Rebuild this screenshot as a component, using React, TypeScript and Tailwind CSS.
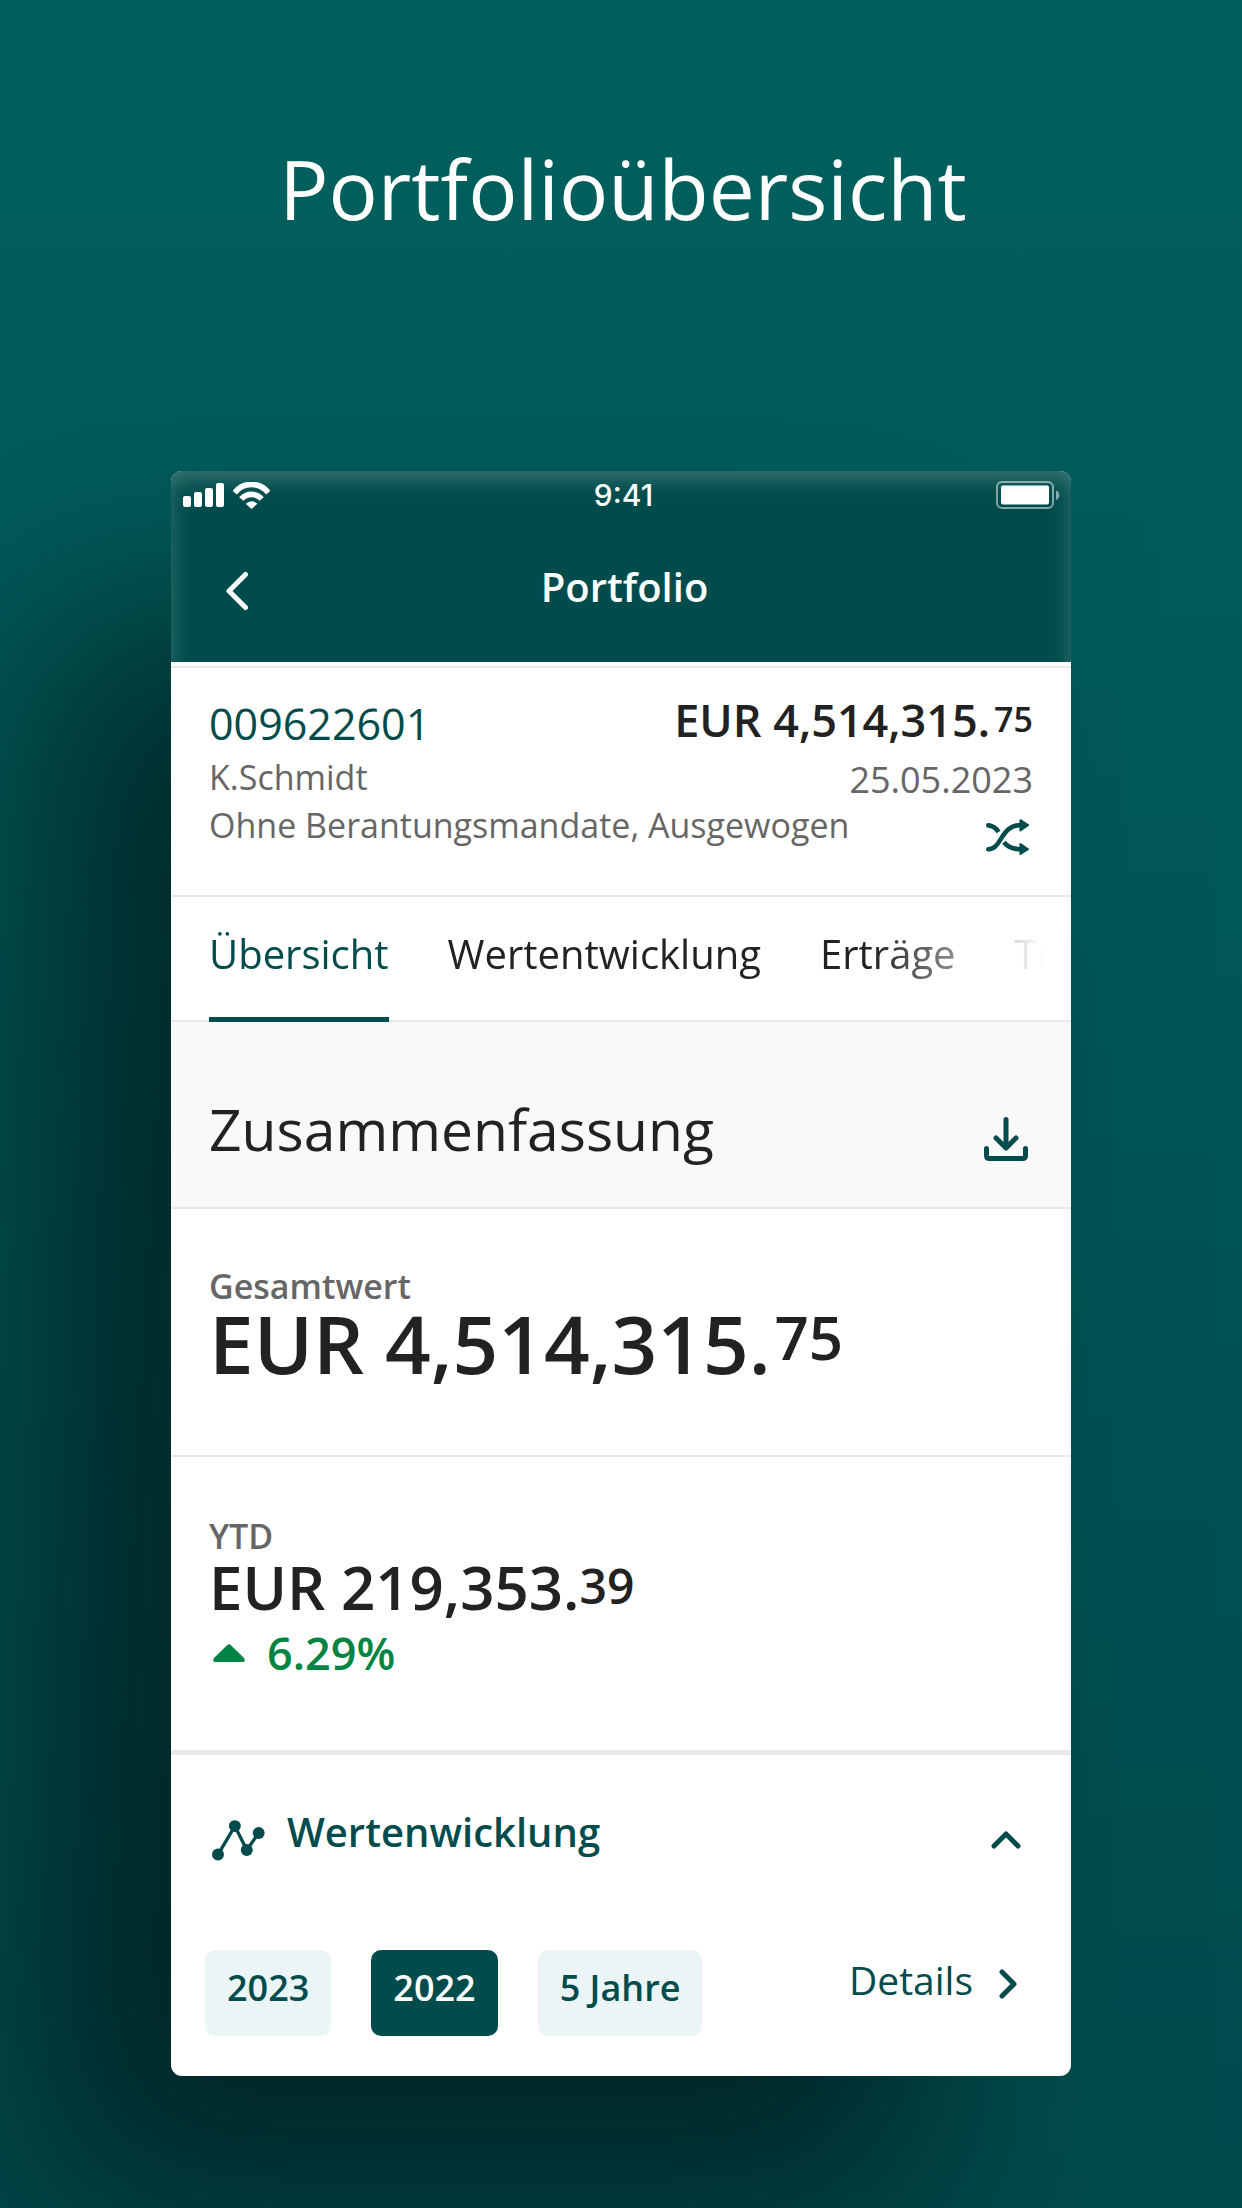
import type { ReactNode } from "react";

function SignalIcon() {
  return (
    <svg viewBox="0 0 41 24" className="h-6 w-[41px]" fill="currentColor" aria-hidden="true">
      <rect x="0" y="13" width="8" height="11" rx="2" />
      <rect x="11" y="9" width="8" height="15" rx="2" />
      <rect x="22" y="5" width="8" height="19" rx="2" />
      <rect x="33" y="0" width="8" height="24" rx="2" />
    </svg>
  );
}

function WifiIcon() {
  return (
    <svg viewBox="0 0 111 81" className="h-[27px] w-[37px]" aria-hidden="true">
      <g fill="none" stroke="currentColor" strokeWidth="17">
        <path d="M5 32A64 64 0 0 1 106 32" />
        <path d="M25 51A40 40 0 0 1 86 51" />
      </g>
      <path d="M38 65Q55.500 50 73 65L55.500 81Z" fill="currentColor" />
    </svg>
  );
}

function BatteryIcon() {
  return (
    <svg viewBox="0 0 68 28" className="h-7 w-[68px]" aria-hidden="true">
      <rect x="1" y="1" width="56" height="26" rx="5" fill="none" stroke="#fff" strokeOpacity=".5" strokeWidth="2" />
      <rect x="5" y="4.500" width="48" height="19" rx="2" fill="#fff" />
      <path d="M60 9.500C64.500 11 64.500 17.500 60 19Z" fill="#fff" fillOpacity=".5" />
    </svg>
  );
}

function BackIcon() {
  return (
    <svg viewBox="0 0 22 40" className="h-10 w-[22px]" fill="none" stroke="currentColor" strokeWidth="5" strokeLinecap="round" strokeLinejoin="round" aria-hidden="true">
      <path d="M19.500 3.500L3 20L19.500 36.500" />
    </svg>
  );
}

function ShuffleIcon() {
  return (
    <svg viewBox="0 0 130 108" className="h-9 w-[43px]" fill="none" stroke="currentColor" strokeWidth="14" aria-hidden="true">
      <path d="M7 91C48 91 44 18 104 18" />
      <path d="M54 70C66 85 80 91 104 91" />
      <path d="M7 19C20 20 30 27 38 39" />
      <g fill="currentColor" stroke="none">
        <circle cx="7" cy="19" r="7" />
        <circle cx="7" cy="91" r="7" />
      </g>
      <g fill="currentColor" strokeWidth="6" strokeLinejoin="round">
        <path d="M104 3L127 18L104 34Z" />
        <path d="M104 75L127 91L104 105Z" />
      </g>
    </svg>
  );
}

function DownloadIcon() {
  return (
    <svg viewBox="0 0 44 44" className="size-11" fill="none" stroke="currentColor" strokeWidth="5" strokeLinecap="round" strokeLinejoin="round" aria-hidden="true">
      <path d="M22 2.500V30" />
      <path d="M12 21L22 31L32 21" />
      <path d="M2.500 31.500V38.500Q2.500 41.500 5.500 41.500H38.500Q41.500 41.500 41.500 38.500V31.500" />
    </svg>
  );
}

function TrendIcon() {
  return (
    <svg viewBox="0 0 160 123" className="h-[41px] w-[53px]" aria-hidden="true">
      <path d="M18 104L69 18L105 90L141 39" fill="none" stroke="currentColor" strokeWidth="10" />
      <g fill="currentColor">
        <circle cx="18" cy="104" r="18" />
        <circle cx="69" cy="18" r="18" />
        <circle cx="105" cy="90" r="18" />
        <circle cx="141" cy="39" r="18" />
      </g>
    </svg>
  );
}

function ChevronUpIcon() {
  return (
    <svg viewBox="0 0 30 42" className="h-[42px] w-[30px]" fill="none" stroke="currentColor" strokeWidth="5" strokeLinecap="round" strokeLinejoin="round" aria-hidden="true">
      <path d="M3 27L15 15L27 27" />
    </svg>
  );
}

function ChevronRightIcon() {
  return (
    <svg viewBox="0 0 18 30" className="h-[30px] w-[18px]" fill="none" stroke="currentColor" strokeWidth="5" strokeLinecap="round" strokeLinejoin="round" aria-hidden="true">
      <path d="M3 3L15 15L3 27" />
    </svg>
  );
}

function GainIcon() {
  return (
    <svg viewBox="0 0 32 18" className="h-[18px] w-8" fill="currentColor" aria-hidden="true">
      <path d="M14.300 0.900Q16 -0.600 17.700 0.900L31 14Q33 18 29.500 18H2.500Q-1 18 1 14Z" />
    </svg>
  );
}

function Tab({ active = false, children }: { active?: boolean; children: ReactNode }) {
  return (
    <button
      type="button"
      role="tab"
      aria-selected={active}
      className={
        active
          ? "h-[125px] shrink-0 border-b-5 border-[#004c4c] pb-1.5 text-[#004c4c]"
          : "h-[125px] shrink-0 border-b-5 border-transparent pb-1.5 text-[#222]"
      }
    >
      {children}
    </button>
  );
}

function Period({ active = false, children }: { active?: boolean; children: ReactNode }) {
  return (
    <button
      type="button"
      aria-pressed={active}
      className={
        active
          ? "h-[86px] rounded-[10px] bg-[#004c4c] px-[22px] pb-2.5 text-white"
          : "h-[86px] rounded-[10px] bg-[#ecf5f6] px-[22px] pb-2.5 text-[#004c4c]"
      }
    >
      {children}
    </button>
  );
}

export default function App() {
  return (
    <main className="flex min-h-screen flex-col items-center overflow-hidden bg-linear-to-b from-[#00605e] to-[#004a4c] font-['Open_Sans',sans-serif]">
      <h1 className="pt-[138px] pl-1 text-[82px] leading-[100px] text-white">Portfolioübersicht</h1>

      <div className="relative mt-[233px] mb-[132px] w-full max-w-[900px] rounded-[11px] bg-white text-[#222] shadow-[-142px_138px_200px_-12px_rgba(0,0,0,0.52)]">
        <header className="rounded-t-[11px] bg-[#004c4c] text-white">
          <div className="grid h-12 grid-cols-[1fr_auto_1fr] items-center pr-[7px] pl-3">
            <div className="flex items-center gap-[9px]">
              <SignalIcon />
              <WifiIcon />
            </div>
            <span className="font-['Inter',sans-serif] text-[30px] leading-8 font-medium">9:41</span>
            <div className="flex justify-end">
              <BatteryIcon />
            </div>
          </div>
          <div className="grid h-[143px] grid-cols-[1fr_auto_1fr] items-center pr-12 pl-[55px]">
            <button type="button" aria-label="Zurück" className="justify-self-start">
              <BackIcon />
            </button>
            <h2 className="pb-2 text-[40px] leading-[48px] font-semibold">Portfolio</h2>
          </div>
        </header>
        <div className="pointer-events-none absolute inset-0 rounded-[11px] shadow-[inset_0_8px_20px_rgba(255,255,255,0.22)]" />

        <section className="mt-1 flex justify-between border-y-2 border-[#e8e8e8] px-[38px] pt-[27px] pb-10">
          <div>
            <p className="text-[43px] leading-[58px] text-[#004c4c]">009622601</p>
            <p className="text-[34px] leading-[48px] text-[#666]">K.Schmidt</p>
            <p className="text-[34px] leading-[48px] whitespace-nowrap text-[#666]">Ohne Berantungsmandate, Ausgewogen</p>
          </div>
          <div className="flex w-0 flex-col items-end whitespace-nowrap">
            <p className="text-[45px] leading-[50px] font-semibold">
              EUR 4,514,315.<span className="ml-1 align-[5px] text-[34px] leading-none">75</span>
            </p>
            <p className="mt-[11px] text-[36px] leading-[48px] text-[#666]">25.05.2023</p>
            <button type="button" aria-label="Portfolio wechseln" className="mt-[15px] mr-1 text-[#004c4c]">
              <ShuffleIcon />
            </button>
          </div>
        </section>

        <nav className="shadow-[inset_0_-2px_0_#e8e8e8]">
          <div
            role="tablist"
            className="flex gap-[59px] overflow-hidden pl-[38px] text-[40px] leading-[56px] [mask-image:linear-gradient(to_right,black_78%,transparent_97%)]"
          >
            <Tab active>Übersicht</Tab>
            <Tab>Wertentwicklung</Tab>
            <Tab>Erträge</Tab>
            <Tab>Tr</Tab>
          </div>
        </nav>

        <div className="flex items-end justify-between border-b-2 border-[#e8e8e8] bg-[#f9f9f9] pt-[75px] pr-[43px] pb-[46px] pl-[38px]">
          <h2 className="text-[57px] leading-[64px]">Zusammenfassung</h2>
          <button type="button" aria-label="Herunterladen" className="text-[#004c4c]">
            <DownloadIcon />
          </button>
        </div>

        <section className="border-b-2 border-[#e8e8e8] px-[38px] pt-[60px] pb-[72px] font-semibold">
          <p className="text-[34px] leading-[34px] text-[#666]">Gesamtwert</p>
          <p className="text-[80px] leading-[80px]">
            EUR 4,514,315.<span className="ml-1 align-[14px] text-[60px] leading-none">75</span>
          </p>
        </section>

        <section className="border-b-5 border-[#e8e8e8] px-[38px] pt-[62px] pb-[65px] font-semibold">
          <p className="text-[34px] leading-[34px] text-[#666]">YTD</p>
          <p className="text-[60px] leading-[68px]">
            EUR 219,353.<span className="align-[6px] text-[48px] leading-none">39</span>
          </p>
          <p className="flex items-center gap-[22px] pl-1 text-[45px] leading-[64px] text-[#008443]">
            <GainIcon />
            6.29%
          </p>
        </section>

        <section className="pt-[47px] pb-10 text-[#004c4c]">
          <button type="button" aria-expanded="true" className="flex w-full items-end pr-[50px] pl-[41px] text-left">
            <TrendIcon />
            <span className="flex-1 pt-0.5 pb-px pl-[22px] text-[40px] leading-[56px] font-semibold">Wertenwicklung</span>
            <ChevronUpIcon />
          </button>
          <div className="mt-[89px] flex items-center justify-between pr-[54px] pl-[34px]">
            <div className="flex gap-10 text-[36px] font-semibold">
              <Period>2023</Period>
              <Period active>2022</Period>
              <Period>5 Jahre</Period>
            </div>
            <a href="#details" className="flex items-center gap-[26px] pb-[18px]">
              <span className="pb-2 text-[39px] leading-[48px]">Details</span>
              <ChevronRightIcon />
            </a>
          </div>
        </section>
      </div>
    </main>
  );
}
